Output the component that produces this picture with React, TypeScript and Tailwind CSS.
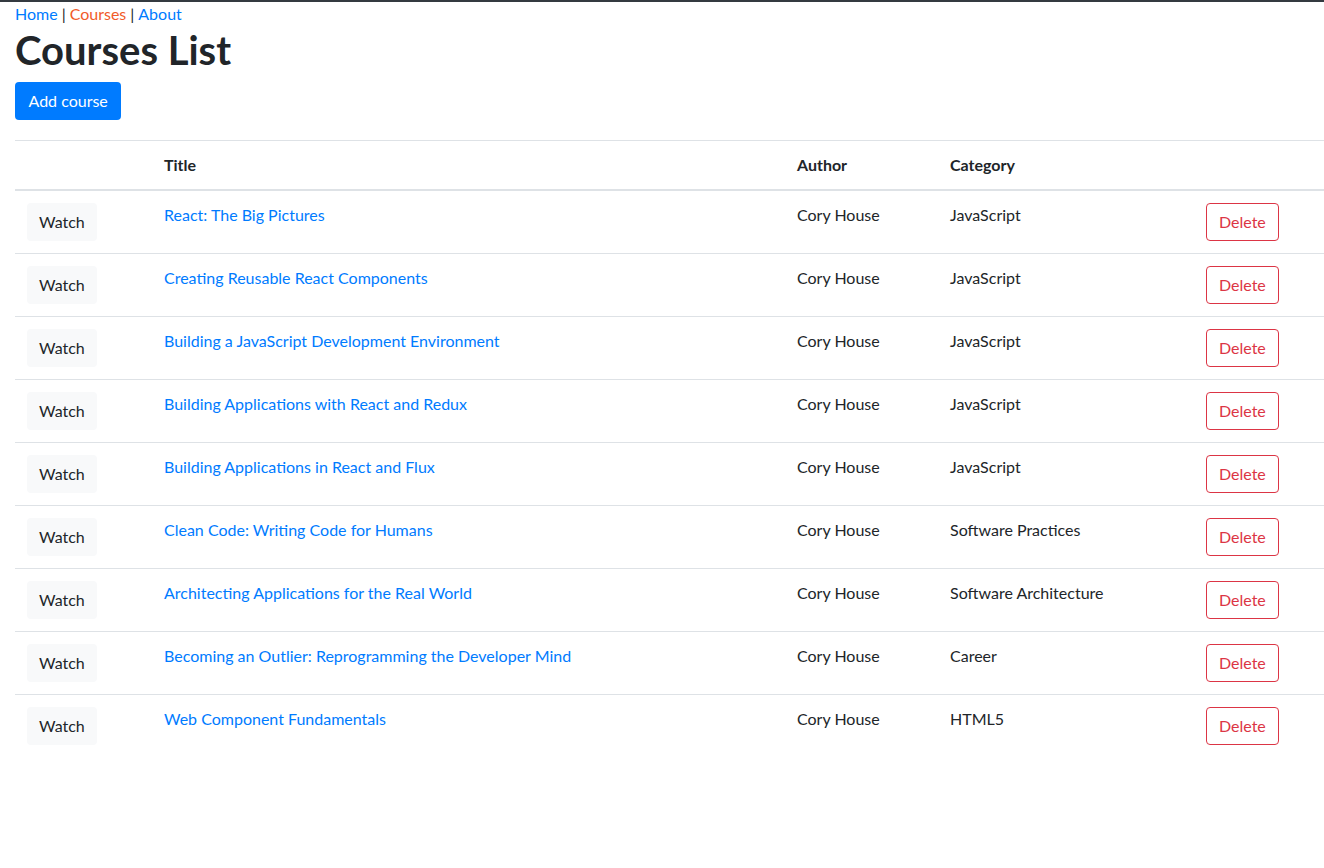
const courses = [
  { title: "React: The Big Pictures", category: "JavaScript" },
  { title: "Creating Reusable React Components", category: "JavaScript" },
  { title: "Building a JavaScript Development Environment", category: "JavaScript" },
  { title: "Building Applications with React and Redux", category: "JavaScript" },
  { title: "Building Applications in React and Flux", category: "JavaScript" },
  { title: "Clean Code: Writing Code for Humans", category: "Software Practices" },
  { title: "Architecting Applications for the Real World", category: "Software Architecture" },
  { title: "Becoming an Outlier: Reprogramming the Developer Mind", category: "Career" },
  { title: "Web Component Fundamentals", category: "HTML5" },
];

export default function App() {
  return (
    <div className="min-h-screen bg-white text-[16px] leading-6 text-[#212529] [font-family:Lato,sans-serif]">
      <div className="h-[2px] bg-[#343a40]" />
      <div className="pl-[15px]">
        <nav className="flex">
          <a href="#" className="text-[#007bff]">Home</a>
          <span className="px-1">|</span>
          <a href="#" className="text-[#f15b2a]">Courses</a>
          <span className="px-1">|</span>
          <a href="#" className="text-[#007bff]">About</a>
        </nav>
        <h1 className="mb-2 text-[40px] font-bold leading-[48px]">Courses List</h1>
        <button className="h-[38px] rounded bg-[#007bff] px-[13.5px] text-white">Add course</button>
        <table className="mt-5 w-[1309px] border-collapse text-left">
          <thead>
            <tr className="border-t border-[#dee2e6]">
              <th className="w-[137px] border-b-2 border-[#dee2e6] p-3" />
              <th className="w-[633px] border-b-2 border-[#dee2e6] p-3 align-bottom font-bold">Title</th>
              <th className="w-[153px] border-b-2 border-[#dee2e6] p-3 align-bottom font-bold">Author</th>
              <th className="w-[256px] border-b-2 border-[#dee2e6] p-3 align-bottom font-bold">Category</th>
              <th className="border-b-2 border-[#dee2e6] p-3" />
            </tr>
          </thead>
          <tbody>
            {courses.map((c) => (
              <tr key={c.title} className="border-t border-[#dee2e6] first:border-t-0">
                <td className="p-3 align-top">
                  <button className="h-[38px] rounded bg-[#f8f9fa] px-3 text-[#212529]">Watch</button>
                </td>
                <td className="p-3 align-top">
                  <a href="#" className="text-[#007bff]">{c.title}</a>
                </td>
                <td className="p-3 align-top">Cory House</td>
                <td className="p-3 align-top">{c.category}</td>
                <td className="p-3 align-top">
                  <button className="h-[38px] rounded border border-[#dc3545] px-3 text-[#dc3545]">Delete</button>
                </td>
              </tr>
            ))}
          </tbody>
        </table>
      </div>
    </div>
  );
}
